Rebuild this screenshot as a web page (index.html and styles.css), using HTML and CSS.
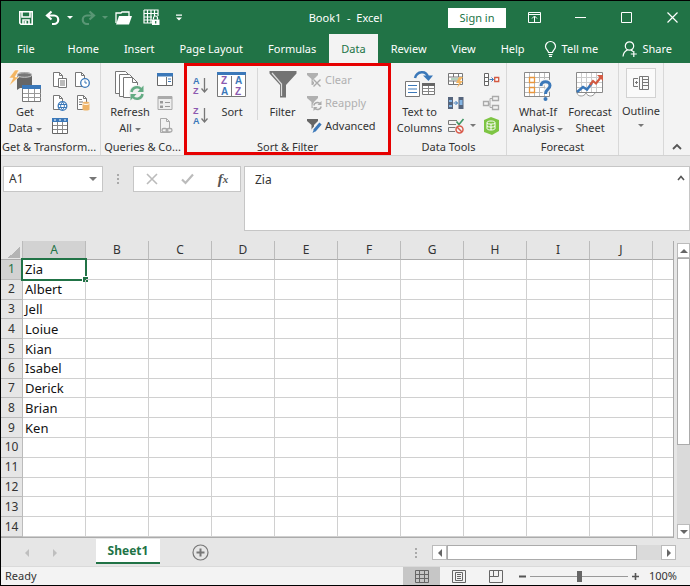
FILE: index.html
```
<!DOCTYPE html>
<html lang="en">
<head>
    <meta charset="UTF-8">
    <meta name="viewport" content="width=device-width, initial-scale=1.0">
    <title>Book1 - Excel</title>
    <link rel="stylesheet" href="styles.css">
</head>
<body>
    <div class="window">
        <header class="titlebar">
            <div class="quick-access">
                <button type="button" aria-label="Save"><svg width="16" height="16" viewBox="0 0 16 16" fill="none" stroke="#fff" stroke-width="1.6"><path d="M1.8 1.8h12.4v12.4H3L1.8 13z"/><path d="M4 2v5h8V2M5 14v-4h6v4" /><path d="M7.5 11v3" stroke-width="2"/></svg></button>
                <button type="button" class="with-caret" aria-label="Undo"><svg width="16" height="16" viewBox="0 0 16 16" fill="none" stroke="#fff" stroke-width="2.2"><path d="M6.5 1.5L2 5.5l4.500 4M2.500 5.500H9a4 4 0 0 1 0 8.500H7"/></svg><span class="caret"></span></button>
                <button type="button" class="with-caret faded" aria-label="Redo"><svg width="16" height="16" viewBox="0 0 16 16" fill="none" stroke="#fff" stroke-width="2.200"><path d="M9.500 1.500L14 5.500l-4.500 4M13.500 5.500H7a4 4 0 0 0 0 8.500h2"/></svg><span class="caret"></span></button>
                <button type="button" aria-label="Open"><svg width="17" height="16" viewBox="0 0 17 16"><path d="M1 13V3h5l1-1h7v4" fill="none" stroke="#fff" stroke-width="1.300"/><path d="M4 6h13l-3 8.500H1z" fill="#fff"/></svg></button>
                <button type="button" class="lock" aria-label="Protect sheet"><svg width="17" height="17" viewBox="0 0 17 17" fill="none" stroke="#fff" stroke-width="1.200"><path d="M1 1h14v6M1 1v13h8M1 4.500h14M1 8h8M1 11h8M4.500 1v13M8 1v13M11.500 1v6"/><path d="M10.500 10.500V9a2 2 0 0 1 4 0v1.500"/><path d="M9 10.500h7.500V16H9z" fill="#fff" stroke="none"/><path d="M12.700 12v2.500" stroke="#217346"/></svg></button>
                <button type="button" aria-label="Customize"><svg width="8" height="8" viewBox="0 0 8 8" fill="#fff"><path d="M1 0.500h6v1.200H1zM1 3.500h6L4 6.500z"/></svg></button>
            </div>
            <h1>Book1&nbsp; -&nbsp; Excel</h1>
            <div class="window-controls">
                <button type="button" class="sign-in">Sign in</button>
                <button type="button" aria-label="Ribbon display options"><svg width="13" height="11" viewBox="0 0 13 11" fill="none" stroke="#fff"><path d="M.5.5h12v10H.5zM.5 2.500h12M6.500 10V4.500M4 6.500l2.500-2.500L9 6.500"/></svg></button>
                <button type="button" aria-label="Minimize"><svg width="11" height="11" viewBox="0 0 11 11" stroke="#fff"><path d="M0 5.500h11"/></svg></button>
                <button type="button" aria-label="Maximize"><svg width="11" height="11" viewBox="0 0 11 11" fill="none" stroke="#fff"><path d="M.5.5h10v10H.5z"/></svg></button>
                <button type="button" aria-label="Close"><svg width="11" height="11" viewBox="0 0 11 11" fill="none" stroke="#fff" stroke-width="1.200"><path d="M.5.5l10 10M10.500.5l-10 10"/></svg></button>
            </div>
        </header>

        <nav class="tabs">
            <a href="#" class="file">File</a>
            <a href="#">Home</a>
            <a href="#">Insert</a>
            <a href="#">Page Layout</a>
            <a href="#">Formulas</a>
            <a href="#" class="active">Data</a>
            <a href="#">Review</a>
            <a href="#">View</a>
            <a href="#">Help</a>
            <a href="#" class="tell-me"><svg width="13" height="16" viewBox="0 0 13 16" fill="none" stroke="#fff" stroke-width="1.200"><path d="M4.500 11.500c0-2-3-3-3-6a5 5 0 0 1 10 0c0 3-3 4-3 6zM4.500 13.500h4M5 15.300h3"/></svg>Tell me</a>
            <a href="#" class="share"><svg width="16" height="16" viewBox="0 0 16 16" fill="none" stroke="#fff" stroke-width="1.200"><circle cx="7.500" cy="5" r="4.200"/><path d="M1 15.500c.3-3 2-5.500 4.500-6.500M9 9l2 1.500M11.800 10v6M8.800 13h6"/></svg>Share</a>
        </nav>

        <section class="ribbon">
            <div class="group get-data">
                <div class="tools">
                    <button type="button" class="big">
                        <svg width="34" height="34" viewBox="0 0 34 34"><path d="M9 6c0-4 15-4 15 0v13H12l-3 2z" fill="#666"/><ellipse cx="16.500" cy="6" rx="7.500" ry="2.300" fill="#777" stroke="#ddd" stroke-width=".8"/><path d="M7 1L1 9h4L1 17l10-9H7l4-7z" fill="#f3b562" stroke="#fff" stroke-width=".5"/><path d="M14.500 16.500h18v16h-18z" fill="#fff" stroke="#777"/><path d="M14 16h19v4H14z" fill="#3b78b9"/><path d="M15 24.500h18M15 28.500h18M20.500 20v12M26.500 20v12" stroke="#999"/></svg>
                        <span>Get<br>Data <i class="caret"></i></span>
                    </button>
                    <div class="small-grid">
                        <button type="button" aria-label="From text"><svg width="16" height="16" viewBox="0 0 16 16" fill="#fff" stroke="#777"><path d="M1.500.5h6l3 3v11h-9z"/><path d="M7.500.5v3h3" fill="none"/><path d="M6.500 6.500h8v9h-8z"/><path d="M8 9h5M8 11h5M8 13h5"/></svg></button>
                        <button type="button" aria-label="Recent sources"><svg width="16" height="16" viewBox="0 0 16 16" fill="#fff" stroke="#777"><path d="M1.500.5h6l3 3v11h-9z"/><path d="M7.500.5v3h3" fill="none"/><circle cx="11" cy="11" r="4.300" stroke="#3b78b9" stroke-width="1.300"/><path d="M11 8.500V11h2" fill="none" stroke="#3b78b9"/></svg></button>
                        <button type="button" aria-label="From web"><svg width="16" height="16" viewBox="0 0 16 16" fill="#fff" stroke="#777"><path d="M1.500.5h6l3 3v11h-9z"/><path d="M7.500.5v3h3" fill="none"/><circle cx="10.500" cy="11" r="4.300" stroke="#3b78b9" stroke-width="1.300"/><path d="M6.500 9.500h8M6.500 12.500h8M10.500 7c-2.500 3-2.500 5 0 8c2.500-3 2.500-5 0-8" fill="none" stroke="#3b78b9"/></svg></button>
                        <button type="button" aria-label="Existing connections"><svg width="16" height="16" viewBox="0 0 16 16" fill="#fff" stroke="#777"><path d="M3.500.5h6l3 3v11h-9z"/><path d="M9.500.5v3h3M5 4.500h3M5 7h4M5 9.500h3" fill="none"/><path d="M8.500 8c0-1.600 7-1.600 7 0v6.500c0 1.300-7 1.300-7 0z" fill="#eeb367" stroke="none"/><path d="M8.500 8.500c1 1.200 6 1.200 7 0" fill="none" stroke="#fff"/></svg></button>
                        <button type="button" aria-label="From table"><svg width="16" height="16" viewBox="0 0 16 16"><path d="M.5 1.500h15v14H.5z" fill="#fff" stroke="#666"/><path d="M0 0h16v4H0z" fill="#3b78b9"/><path d="M2 2h2M7 2h2M12 2h2" stroke="#fff"/><path d="M1 7.500h14M1 11.500h14M5.500 4v11M10.500 4v11" stroke="#888"/></svg></button>
                    </div>
                </div>
                <h2>Get &amp; Transform...</h2>
            </div>

            <div class="group queries">
                <div class="tools">
                    <button type="button" class="big">
                        <svg width="32" height="34" viewBox="0 0 32 34" fill="#fff" stroke="#777"><path d="M1.500 2.500h10l5 5v17h-15z"/><path d="M5.500 5.500h10l5 5v17h-15z"/><path d="M9.500 8.500h9l5 5v15h-14z"/><path d="M18.500 8.500v5h5" fill="none"/><circle cx="23" cy="24" r="8" fill="#f1f1f1" stroke="none"/><path d="M17.500 23a5.500 5.500 0 0 1 9.500-3M28.500 25a5.500 5.500 0 0 1-9.500 3" fill="none" stroke="#63ab83" stroke-width="2.500"/><path d="M29.500 16.500v6.500h-6zM16.500 31.500V25h6z" fill="#63ab83" stroke="none"/></svg>
                        <span>Refresh<br>All <i class="caret"></i></span>
                    </button>
                    <div class="small-col">
                        <button type="button" aria-label="Queries"><svg width="16" height="16" viewBox="0 0 16 16"><path d="M.5 1.500h15v12H.5z" fill="#fff" stroke="#666"/><path d="M0 1h16v3.500H0z" fill="#3b78b9"/><path d="M9.500 5v8" stroke="#777"/><path d="M11 7h3M11 9.500h3" stroke="#3b78b9"/></svg></button>
                        <button type="button" aria-label="Properties"><svg width="16" height="16" viewBox="0 0 16 16"><path d="M1 1.500h14v13H1z" fill="#eee" stroke="#aaa"/><path d="M1 1h14v3H1z" fill="#aaa"/><path d="M3 6h3v2.500H3zM3 10.500h3V13H3z" fill="#999"/><path d="M8 7.500h5M8 11.500h5" stroke="#999"/></svg></button>
                        <button type="button" aria-label="Edit links"><svg width="16" height="16" viewBox="0 0 16 16" fill="#f3f3f3" stroke="#aaa"><path d="M3.500.5h6l3 3v11h-9z"/><path d="M9.500.5v3h3" fill="none"/><g fill="#f3f3f3" stroke-width="1.300"><rect x="5" y="10.500" width="5" height="3.500" rx="1.700"/><rect x="10" y="10.500" width="5" height="3.500" rx="1.700"/><path d="M8.500 12.200h3"/></g></svg></button>
                    </div>
                </div>
                <h2>Queries &amp; Co...</h2>
            </div>

            <div class="group sort-filter">
                <div class="tools">
                    <div class="sort-col">
                        <button type="button" aria-label="Sort A to Z"><svg width="16" height="22" viewBox="0 0 16 22"><text x="0" y="10" class="blue">A</text><text x="0" y="20" class="purple">Z</text><path d="M11.500 4v14M8.500 14.500l3 3.500 3-3.500" fill="none" stroke="#777" stroke-width="1.300"/></svg></button>
                        <button type="button" aria-label="Sort Z to A"><svg width="16" height="22" viewBox="0 0 16 22"><text x="0" y="10" class="purple">Z</text><text x="0" y="20" class="blue">A</text><path d="M11.500 4v14M8.500 14.500l3 3.500 3-3.500" fill="none" stroke="#777" stroke-width="1.300"/></svg></button>
                    </div>
                    <button type="button" class="big">
                        <svg width="30" height="34" viewBox="0 0 30 34"><path d="M.5 4.500h28v23H.5zM14.500 7v20" fill="#fff" stroke="#777"/><path d="M0 3h29v3H0z" fill="#3b78b9"/><g class="letters"><text x="4" y="15" class="purple">Z</text><text x="4" y="26" class="blue">A</text><text x="18" y="15" class="blue">A</text><text x="18" y="26" class="purple">Z</text></g></svg>
                        <span>Sort</span>
                    </button>
                    <button type="button" class="big filter">
                        <svg width="28" height="34" viewBox="0 0 28 34"><path d="M.5 2h27v2.500L17 16v12.500h-6V16L.5 4.500z" fill="#737373"/><path d="M3 4l9.500 11v12" fill="none" stroke="#ddd" stroke-width="1.200"/></svg>
                        <span>Filter</span>
                    </button>
                    <div class="filter-list">
                        <button type="button" disabled><svg width="16" height="16" viewBox="0 0 16 16"><path d="M0 1h11v2L7 7v6H4.500V7L0 3z" fill="#b0b0b0"/><path d="M6.500 7.500l7 7M13.500 7.500l-7 7" stroke="#f3f3f3" stroke-width="3"/><path d="M6.500 7.500l7 7M13.500 7.500l-7 7" stroke="#aaa" stroke-width="1.400"/></svg>Clear</button>
                        <button type="button" disabled><svg width="16" height="16" viewBox="0 0 16 16"><path d="M0 1h11v2L7 7v6H4.500V7L0 3z" fill="#b0b0b0"/><circle cx="10.500" cy="11" r="5" fill="#f3f3f3"/><path d="M6.800 10.500a3.700 3.700 0 0 1 6-2.200M14.200 11.500a3.700 3.700 0 0 1-6 2.200" fill="none" stroke="#aaa" stroke-width="1.500"/><path d="M14.500 6v4h-4zM6.500 16v-4h4z" fill="#aaa"/></svg>Reapply</button>
                        <button type="button"><svg width="16" height="16" viewBox="0 0 16 16"><path d="M0 1h11v2L7 7v6H4.500V7L0 3z" fill="#666"/><path d="M13 5.500L5.500 14" stroke="#f3f3f3" stroke-width="5"/><path d="M13.500 5.500l-6 7" stroke="#3b78b9" stroke-width="3"/><path d="M7 11l2 2-3.500 2z" fill="#3b78b9"/></svg>Advanced</button>
                    </div>
                </div>
                <h2>Sort &amp; Filter</h2>
            </div>

            <div class="group data-tools">
                <div class="tools">
                    <button type="button" class="big">
                        <svg width="32" height="34" viewBox="0 0 32 34"><path d="M11 9c2-7 11-8 13-1" fill="none" stroke="#3b78b9" stroke-width="2.500"/><path d="M19 6.500h10L24.500 12z" fill="#3b78b9"/><path d="M1.500 12.500h14v15h-14z" fill="#fff" stroke="#777"/><path d="M4 16.500h9M4 20h9M4 23.500h9" stroke="#3b78b9"/><path d="M18.500 14.500h12v11h-12z" fill="#fff" stroke="#777"/><path d="M18 14h13v3H18z" fill="#666"/><path d="M19 19.500h12M19 22.500h12M24.500 17v8" stroke="#888"/></svg>
                        <span>Text to<br>Columns</span>
                    </button>
                    <div class="small-grid">
                        <button type="button" aria-label="Flash fill"><svg width="16" height="16" viewBox="0 0 16 16"><path d="M.5 1.500h14v11H.5z" fill="#fff" stroke="#777"/><path d="M1 5h14M1 9h10M5.500 2v3M10.500 2v3M5.500 9v3" stroke="#777"/><path d="M3 7h8" stroke="#68a37c"/><path d="M11 5l-3 6h3l-2 5 6-7h-3l3-4z" fill="#f3b562"/></svg></button>
                        <button type="button" aria-label="Consolidate"><svg width="17" height="14" viewBox="0 0 17 14"><path d="M1.500.5h4v12h-4z" fill="#fff" stroke="#666"/><path d="M2 4.500h3M2 8.500h3" stroke="#666"/><path d="M6.500 6.500h4M8.500 4.500l2 2-2 2" fill="none" stroke="#3b78b9"/><path d="M11.700 4.500h4v4h-4z" fill="#fff" stroke="#d35a42" stroke-width="1.300"/></svg></button>
                        <button type="button" aria-label="Remove duplicates"><svg width="16" height="16" viewBox="0 0 16 16"><path d="M0 2h5v12H0zM10.500 2h5v12h-5z" fill="#55657d"/><path d="M1 5h3v2H1zM1 10h3v2H1zM11.500 5h3v5h-3z" fill="#83b4e3"/><path d="M5.500 8h4M7.500 6l2 2-2 2" fill="none" stroke="#3b78b9"/></svg></button>
                        <button type="button" aria-label="Relationships"><svg width="16" height="16" viewBox="0 0 16 16" fill="#f3f3f3" stroke="#aaa"><path d="M4 9h3V3.500h4M7 9v3.500h4" fill="none"/><path d="M.5 6.500h5v4h-5zM9.500 1.500h6v4h-6zM9.500 10.500h6v4h-6z" stroke-width="1.300"/></svg></button>
                        <button type="button" class="validation" aria-label="Data validation"><svg width="16" height="16" viewBox="0 0 16 16" fill="none"><path d="M9 2.500H.5v4H8M7.500 9.500h-7v4H7" stroke="#777"/><path d="M8.500 3.500l2.500 3 4.500-5.500" stroke="#3f9664" stroke-width="1.600"/><circle cx="11.500" cy="11.500" r="3.500" stroke="#d95b4b" stroke-width="1.500"/><path d="M9 9l5 5" stroke="#d95b4b" stroke-width="1.500"/></svg><i class="caret"></i></button>
                        <button type="button" aria-label="Manage data model"><svg width="16" height="18" viewBox="0 0 16 18"><path d="M1 3l7-3 8 3v11l-7 4-8-3z" fill="#7ec544"/><path d="M4 5.500c0-2 8-2 8 0v6c0 2-8 2-8 0zM4 6c1 1.500 7 1.500 8 0M4 9c1 1.500 7 1.500 8 0M8 7v6" fill="none" stroke="#fff"/></svg></button>
                    </div>
                </div>
                <h2>Data Tools</h2>
            </div>

            <div class="group forecast">
                <div class="tools">
                    <button type="button" class="big">
                        <svg width="30" height="34" viewBox="0 0 30 34"><path d="M1.500 3.500h25v24h-25z" fill="#fff" stroke="#888"/><path d="M2 8.500h24M2 13.500h24M2 18.500h24M2 23.500h24M6.500 4v23M11.500 4v23M16.500 4v23M21.500 4v23" stroke="#bbb"/><path d="M6.500 8.500h5v5h-5zM6.500 18.500h5v5h-5z" fill="#fff" stroke="#e8953b" stroke-width="1.300"/><path d="M18 18c0-7 9-6.500 9-1.500 0 4-4.500 3.500-4.500 8" fill="none" stroke="#f3f3f3" stroke-width="6"/><path d="M18 17c0-6 9-5.500 9-.5 0 4-4.500 3.500-4.500 8.500" fill="none" stroke="#3b78b9" stroke-width="3"/><circle cx="22.500" cy="30" r="2" fill="#3b78b9"/></svg>
                        <span>What-If<br>Analysis <i class="caret"></i></span>
                    </button>
                    <button type="button" class="big">
                        <svg width="30" height="34" viewBox="0 0 30 34"><path d="M1.500 3.500h26v20h-26z" fill="#fff" stroke="#888"/><path d="M2 8.500h25M2 13.500h25M2 18.500h25M6.500 4v19M11.500 4v19M16.500 4v19M21.500 4v19" stroke="#ccc"/><path d="M2 24c1 4 7 4 9 0 2 4 7 4 9 0" fill="#fff" stroke="#999"/><path d="M2 23l6-5 4 2.500L17 14" fill="none" stroke="#3b78b9" stroke-width="2.500"/><path d="M15 16l3-4 3 2.500L26 8" fill="none" stroke="#d35a42" stroke-width="2.200"/><path d="M22 6h6v6z" fill="#d35a42"/></svg>
                        <span>Forecast<br>Sheet</span>
                    </button>
                </div>
                <h2>Forecast</h2>
            </div>

            <div class="group outline">
                <button type="button" class="outline-button">
                    <span class="frame"><svg width="16" height="14" viewBox="0 0 16 14" fill="none" stroke="#777"><path d="M5 2.500H.5v8H5M2 6.500h3M3.500 5v3M6.500.5h9v13h-9zM9.500 1v12M10 3.500h5M10 6.500h5M10 9.500h5"/></svg></span>
                    <span>Outline</span>
                    <i class="caret"></i>
                </button>
            </div>

            <button type="button" class="collapse" aria-label="Collapse the ribbon"><svg width="10" height="6" viewBox="0 0 10 6" fill="none" stroke="#555" stroke-width="1.800"><path d="M1 5l4-4 4 4"/></svg></button>
        </section>

        <section class="formula-bar">
            <div class="name-box">
                <input type="text" value="A1" aria-label="Name box">
                <i class="caret"></i>
            </div>
            <span class="grip"></span>
            <div class="formula-actions">
                <button type="button" aria-label="Cancel"><svg width="12" height="12" viewBox="0 0 12 12" stroke="#bbb" stroke-width="1.600"><path d="M1 1l10 10M11 1L1 11"/></svg></button>
                <button type="button" aria-label="Enter"><svg width="13" height="12" viewBox="0 0 13 12" fill="none" stroke="#bbb" stroke-width="2.200"><path d="M1 6.500l3.500 3.500L12 1.500"/></svg></button>
                <button type="button" class="fx" aria-label="Insert function">f<small>x</small></button>
            </div>
            <div class="formula-input">
                <textarea aria-label="Formula">Zia</textarea>
                <svg width="8" height="6" viewBox="0 0 8 6" fill="none" stroke="#555" stroke-width="1.600"><path d="M1 5l3-3.500L7 5"/></svg>
            </div>
        </section>

        <main class="sheet">
            <table>
                <colgroup><col class="row-col"><col span="10" class="data-col"><col></colgroup>
                <thead><tr id="columns"><th class="corner"></th></tr></thead>
                <tbody id="rows"></tbody>
            </table>
            <div class="v-scroll">
                <button type="button" aria-label="Scroll up"><i class="arrow up"></i></button>
                <div class="thumb"></div>
                <div class="track"></div>
                <button type="button" aria-label="Scroll down"><i class="arrow down"></i></button>
            </div>
        </main>

        <div class="sheet-bar">
            <div class="sheet-nav">
                <button type="button" aria-label="Previous sheet"><i class="arrow left"></i></button>
                <button type="button" aria-label="Next sheet"><i class="arrow right"></i></button>
            </div>
            <button type="button" class="sheet-tab">Sheet1</button>
            <button type="button" class="add-sheet" aria-label="New sheet"><svg width="17" height="17" viewBox="0 0 17 17" fill="none" stroke="#777"><circle cx="8.500" cy="8.500" r="7.500" stroke-width="1.200"/><path d="M8.500 4.500v8M4.500 8.500h8" stroke-width="2"/></svg></button>
            <span class="grip"></span>
            <div class="h-scroll">
                <button type="button" aria-label="Scroll left"><i class="arrow left"></i></button>
                <div class="thumb"></div>
                <div class="track"></div>
                <button type="button" aria-label="Scroll right"><i class="arrow right"></i></button>
            </div>
        </div>

        <footer class="status-bar">
            <span class="status">Ready</span>
            <button type="button" class="view active" aria-label="Normal"><svg width="14" height="13" viewBox="0 0 14 13" fill="none" stroke="#666"><path d="M.5.5h13v12H.5zM.5 4.500h13M.5 8.500h13M4.500.5v12M9.500.5v12"/></svg></button>
            <button type="button" class="view" aria-label="Page layout"><svg width="14" height="13" viewBox="0 0 14 13" fill="none" stroke="#666"><path d="M.5.5h13v12H.5zM3.500 2.500h7v8h-7zM5 4.500h4M5 6.500h4M5 8.500h4"/></svg></button>
            <button type="button" class="view" aria-label="Page break preview"><svg width="14" height="13" viewBox="0 0 14 13" fill="none" stroke="#666"><path d="M.5.5h13v12H.5zM4.500.5v6M9.500.5v6M.5 6.500h9"/></svg></button>
            <div class="zoom">
                <button type="button" aria-label="Zoom out"><svg width="7" height="7" viewBox="0 0 7 7" stroke="#555" stroke-width="2"><path d="M0 3.500h7"/></svg></button>
                <input type="range" min="0" max="100" value="50" aria-label="Zoom">
                <button type="button" aria-label="Zoom in"><svg width="7" height="7" viewBox="0 0 7 7" stroke="#555" stroke-width="1.600"><path d="M0 3.500h7M3.500 0v7"/></svg></button>
                <span class="percent">100%</span>
            </div>
        </footer>
    </div>

    <script>
        const columns = ['A', 'B', 'C', 'D', 'E', 'F', 'G', 'H', 'I', 'J', ''];
        const names = ['Zia', 'Albert', 'Jell', 'Loiue', 'Kian', 'Isabel', 'Derick', 'Brian', 'Ken'];
        const header = document.getElementById('columns');
        const body = document.getElementById('rows');

        columns.forEach((name, i) => {
            const th = document.createElement('th');
            th.textContent = name;
            if (i === 0) th.className = 'selected';
            header.appendChild(th);
        });

        for (let r = 0; r < 14; r++) {
            const tr = document.createElement('tr');
            const th = document.createElement('th');
            th.textContent = r + 1;
            if (r === 0) th.className = 'selected';
            tr.appendChild(th);
            columns.forEach((name, c) => {
                const td = document.createElement('td');
                if (c === 0) td.textContent = names[r] || '';
                if (c === 0 && r === 0) td.className = 'active-cell';
                tr.appendChild(td);
            });
            body.appendChild(tr);
        }
    </script>
</body>
</html>
```

FILE: styles.css
```
* {
    box-sizing: border-box;
}
body {
    margin: 0;
    font-family: "Noto Sans", "Open Sans", sans-serif;
    font-size: 11px;
    line-height: 16px;
    color: #333;
}
button, input, textarea {
    font: inherit;
    color: inherit;
    margin: 0;
    padding: 0;
    border: none;
    background: none;
}
button {
    display: flex;
    align-items: center;
    justify-content: center;
}
svg {
    display: block;
    flex: none;
    overflow: visible;
}
h1, h2 {
    margin: 0;
    font-size: 11px;
    font-weight: normal;
}
a {
    color: inherit;
    text-decoration: none;
}
.window {
    display: flex;
    flex-direction: column;
    min-height: 100vh;
    border: 1px solid #000;
    border-right: none;
    background-color: #e6e6e6;
}
.caret {
    display: inline-block;
    border: 3px solid transparent;
    border-top-color: #777;
    border-bottom: none;
    vertical-align: middle;
}

/* title bar */
.titlebar {
    display: grid;
    grid-template-columns: 1fr auto 1fr;
    align-items: center;
    height: 33px;
    background-color: #217346;
    color: #fff;
}
.titlebar .caret {
    border-top-color: #fff;
}
.quick-access {
    display: flex;
    gap: 11px;
    padding-left: 17px;
}
.with-caret {
    gap: 6px;
    width: 24px;
    justify-content: flex-start;
}
.faded {
    opacity: 0.25;
}
.lock {
    margin-right: 4px;
}
.window-controls {
    display: flex;
    justify-content: flex-end;
    align-items: center;
    gap: 10px;
}
.window-controls button {
    width: 36px;
    height: 20px;
}
.window-controls .sign-in {
    width: 58px;
    background-color: #fff;
    color: #217346;
}

/* tabs */
.tabs {
    display: flex;
    gap: 1px;
    height: 29px;
    background-color: #217346;
    color: #fff;
}
.tabs a {
    display: flex;
    align-items: center;
    padding: 0 12px;
    white-space: nowrap;
}
.tabs .file {
    padding: 0 20px 0 16px;
}
.tabs .active {
    background-color: #f3f3f3;
    color: #217346;
}
.tabs .tell-me {
    gap: 5px;
    padding: 0 6px;
}
.tabs .share {
    gap: 4px;
    margin-left: auto;
    padding: 0 18px 0 0;
}

/* ribbon */
.ribbon {
    display: grid;
    grid-template-columns: 100px 83px 207px 116px 112px 45px 1fr;
    height: 93px;
    background-color: #f3f3f3;
    border-bottom: 1px solid #d2d2d2;
}
.group {
    position: relative;
    display: flex;
    flex-direction: column;
    justify-content: space-between;
    padding: 5px 0 0;
    border-right: 1px solid #d8d8d8;
    white-space: nowrap;
}
.queries, .sort-filter {
    border-right: none;
}
.sort-filter::after {
    content: "";
    position: absolute;
    inset: 0;
    border: 3px solid #e60000;
    pointer-events: none;
}
.group h2 {
    text-align: center;
    height: 16px;
}
.get-data h2 {
    text-align: left;
    padding-left: 1px;
}
.tools {
    display: flex;
    align-items: flex-start;
}
.big {
    flex-direction: column;
    justify-content: flex-start;
    gap: 1px;
    padding-top: 1px;
    width: 50px;
}
.small-grid {
    display: grid;
    grid-template-columns: 22px 22px;
    grid-auto-rows: 23px;
}
.small-col {
    display: grid;
    width: 20px;
    grid-auto-rows: 23px;
}
.get-data .big {
    width: 48px;
}
.queries .tools {
    padding-left: 4px;
}
.sort-filter .tools {
    padding-left: 8px;
}
.sort-col {
    display: grid;
    grid-auto-rows: 30px;
    width: 18px;
    padding-top: 2px;
}
.sort-filter .big {
    width: 44px;
}
.sort-filter .filter {
    width: 50px;
    border-left: 1px solid #d8d8d8;
    margin-left: 3px;
}
svg text {
    font-family: "Liberation Sans", sans-serif;
    font-size: 9px;
    font-weight: bold;
}
.letters text {
    font-size: 10px;
}
.blue {
    fill: #3b78b9;
}
.purple {
    fill: #8c5ab0;
}
.filter-list {
    display: grid;
    grid-auto-rows: 23px;
}
.filter-list button {
    justify-content: flex-start;
    gap: 2px;
}
.filter-list button:disabled {
    color: #b0b0b0;
}
.data-tools .big {
    width: 58px;
}
.data-tools .small-grid {
    grid-template-columns: 35px 23px;
}
.data-tools .small-grid button {
    justify-content: flex-start;
}
.data-tools .validation {
    gap: 6px;
}
.forecast .tools {
    padding-left: 5px;
}
.forecast .big {
    width: 52px;
}
.outline-button {
    flex-direction: column;
    gap: 5px;
}
.frame {
    display: grid;
    place-items: center;
    width: 30px;
    height: 30px;
    border: 1px solid #d2d2d2;
    background-color: #fafafa;
}
.collapse {
    align-self: end;
    padding: 0 4px 5px;
}

/* formula bar */
.formula-bar {
    display: flex;
    align-items: flex-start;
    padding: 10px 0 10px 2px;
    font-size: 12px;
}
.name-box, .formula-actions, .formula-input {
    display: flex;
    align-items: center;
    height: 26px;
    border: 1px solid #c6c6c6;
    background-color: #fff;
}
.name-box {
    width: 100px;
    padding: 0 5px;
}
.name-box input {
    flex: 1;
    min-width: 0;
}
.name-box .caret {
    border-width: 4px;
    border-bottom: none;
}
.grip {
    width: 2px;
    height: 10px;
    margin: 8px 14px;
    background: repeating-linear-gradient(#aaa 0 2px, transparent 2px 4px);
}
.formula-actions {
    width: 108px;
    justify-content: space-around;
    margin-right: 3px;
}
.fx {
    font-family: "Liberation Serif", serif;
    font-size: 15px;
    font-style: italic;
    font-weight: bold;
    color: #555;
}
.fx small {
    font-size: 11px;
}
.formula-input {
    flex: 1;
    height: 65px;
    align-items: flex-start;
    padding: 5px 4px 0 10px;
}
.formula-input textarea {
    flex: 1;
    height: 50px;
    resize: none;
    outline: none;
}
.formula-input svg {
    margin-top: 3px;
}

/* sheet */
.sheet {
    display: flex;
    flex: 1;
    gap: 3px;
}
table {
    flex: 1;
    height: 297px;
    table-layout: fixed;
    border-collapse: separate;
    border-spacing: 0;
    background-color: #fff;
    border-right: 1px solid #ababab;
    border-bottom: 1px solid #ababab;
    font-size: 12px;
}
.row-col {
    width: 22px;
}
.data-col {
    width: 63px;
}
th, td {
    padding: 0;
    line-height: 18px;
    border-right: 1px solid #d0d0d0;
    border-bottom: 1px solid #d0d0d0;
}
th {
    font-weight: normal;
    background-color: #e6e6e6;
    border-color: #bbb;
}
thead th {
    height: 19px;
    border-bottom-color: #ababab;
}
td {
    position: relative;
    padding-left: 2px;
    font-size: 13px;
    color: #111;
}
th:last-child, td:last-child {
    border-right: none;
}
th.selected {
    background-color: #d2d2d2;
    color: #217346;
}
.corner {
    background: linear-gradient(135deg, transparent 50%, #b4b4b4 50%) 7px 5px / 12px 12px no-repeat #e6e6e6;
}
.active-cell::before {
    content: "";
    position: absolute;
    inset: -2px;
    border: 2px solid #217346;
}
.active-cell::after {
    content: "";
    position: absolute;
    right: -3px;
    bottom: -3px;
    width: 5px;
    height: 5px;
    background-color: #217346;
    outline: 1px solid #fff;
}

/* scroll bars */
.arrow {
    border: 4px solid transparent;
}
.arrow.up {
    border-bottom-color: #666;
    border-top: none;
}
.arrow.down {
    border-top-color: #666;
    border-bottom: none;
}
.arrow.left {
    border-right-color: #666;
    border-left: none;
}
.arrow.right {
    border-left-color: #666;
    border-right: none;
}
.v-scroll {
    display: flex;
    flex-direction: column;
    width: 13px;
    padding-top: 2px;
}
.v-scroll button, .h-scroll button {
    flex: none;
    width: 15px;
    height: 15px;
    border: 1px solid #bbb;
    background-color: #fff;
}
.v-scroll button {
    width: 13px;
}
.thumb {
    border: 1px solid #ababab;
    background-color: #fff;
}
.track {
    background-color: #dadada;
}
.v-scroll .thumb {
    flex: 7;
}
.v-scroll .track {
    flex: 3;
}

/* sheet tabs */
.sheet-bar {
    display: flex;
    align-items: center;
    height: 27px;
}
.sheet-nav {
    display: flex;
    justify-content: center;
    gap: 24px;
    width: 95px;
    padding-right: 16px;
    opacity: 0.3;
}
.sheet-tab {
    align-self: flex-start;
    width: 64px;
    height: 25px;
    border-bottom: 2px solid #217346;
    background-color: #fff;
    color: #217346;
    font-size: 12px;
    font-weight: bold;
}
.add-sheet {
    margin-left: 32px;
}
.sheet-bar .grip {
    margin: 0 15px 0 auto;
}
.h-scroll {
    display: flex;
    width: 244px;
    margin-right: 14px;
}
.h-scroll .thumb {
    flex: 8;
}
.h-scroll .track {
    flex: 1;
}

/* status bar */
.status-bar {
    display: flex;
    align-items: center;
    height: 19px;
    background-color: #f3f3f3;
    border-top: 1px solid #dadada;
}
.status {
    flex: 1;
    padding-left: 4px;
}
.view {
    width: 37px;
    height: 18px;
}
.view.active {
    background-color: #c6c6c6;
}
.zoom {
    display: flex;
    align-items: center;
    gap: 4px;
    padding: 0 13px 0 5px;
}
.zoom input {
    appearance: none;
    width: 98px;
    height: 12px;
    background: linear-gradient(#999, #999) center / 100% 1px no-repeat;
}
.zoom input::-webkit-slider-thumb {
    appearance: none;
    width: 5px;
    height: 11px;
    background-color: #666;
}
.percent {
    width: 34px;
    text-align: right;
}
```
